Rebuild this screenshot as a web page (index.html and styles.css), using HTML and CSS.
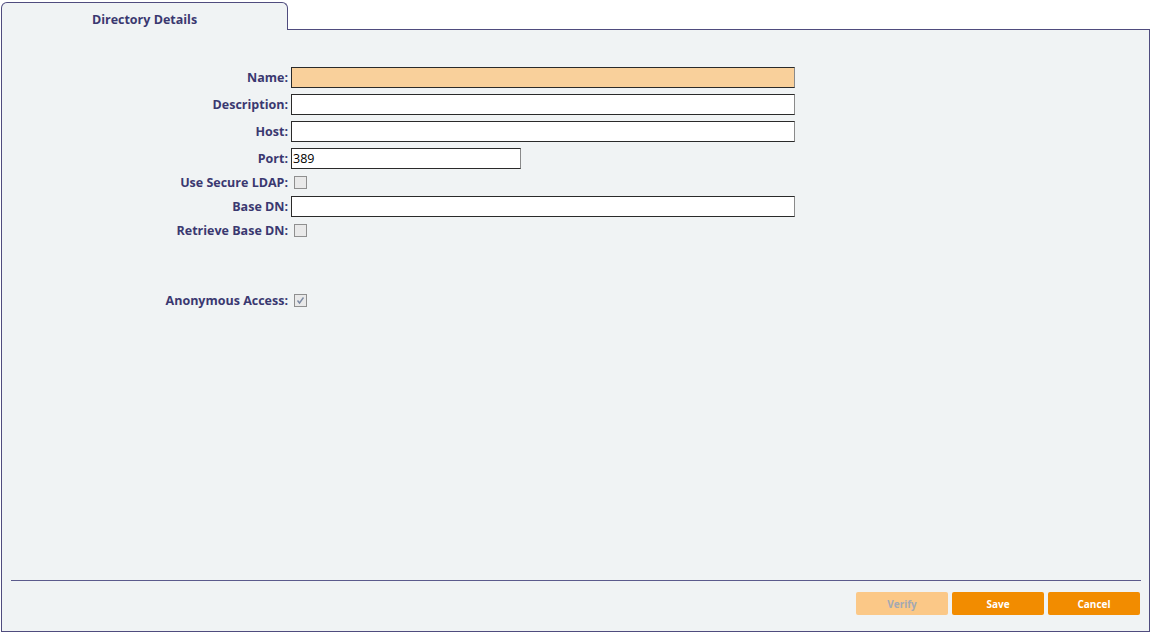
FILE: index.html
```html
<!DOCTYPE html>
<html lang="en">
<head>
    <meta charset="UTF-8">
    <title>Directory Details</title>
    <link rel="stylesheet" href="styles.css">
</head>
<body>

<div class="frame">
    <div class="tabstrip">
        <div class="tab">Directory Details</div>
        <div class="tab-fill"></div>
    </div>

    <div class="panel">
        <form class="form">
            <label for="name">Name:</label>
            <input type="text" id="name" class="field wide name">

            <label for="desc">Description:</label>
            <input type="text" id="desc" class="field wide">

            <label for="host">Host:</label>
            <input type="text" id="host" class="field wide">

            <label for="port">Port:</label>
            <input type="text" id="port" class="field port" value="389">

            <label class="check-label">Use Secure LDAP:</label>
            <div class="check-cell"><span class="check"></span></div>

            <label for="basedn">Base DN:</label>
            <input type="text" id="basedn" class="field wide">

            <label class="check-label">Retrieve Base DN:</label>
            <div class="check-cell"><span class="check"></span></div>

            <div class="spacer"></div>
            <div class="spacer"></div>

            <label class="check-label">Anonymous Access:</label>
            <div class="check-cell">
                <span class="check">
                    <svg width="11" height="11" viewBox="0 0 11 11"><path d="M2.5 5.5 L4.5 8 L8.5 2.5" fill="none" stroke="#7c8aa3" stroke-width="1.4"/></svg>
                </span>
            </div>
        </form>

        <div class="footer">
            <button type="button" class="btn disabled">Verify</button>
            <button type="button" class="btn">Save</button>
            <button type="button" class="btn">Cancel</button>
        </div>
    </div>
</div>

</body>
</html>
```

FILE: styles.css
```css
body {
    margin: 0;
    background: #ffffff;
    font-family: "Open Sans", Arial, sans-serif;
    color: #3a3870;
}
.frame {
    margin: 2px 0 0 1px;
    width: 1149px;
    height: 630px;
    display: flex;
    flex-direction: column;
}
.tabstrip {
    display: flex;
    height: 28px;
}
.tab {
    width: 285px;
    background: #f0f3f4;
    border: 1px solid #4f4c7e;
    border-bottom: none;
    border-radius: 6px 6px 0 0;
    font-size: 12.5px;
    font-weight: bold;
    text-align: center;
    line-height: 16px;
    padding-top: 9px;
    height: 18px;
}
.tab-fill {
    flex: 1;
    border-bottom: 1px solid #4f4c7e;
}
.panel {
    flex: 1;
    background: #f0f3f4;
    border: 1px solid #4f4c7e;
    border-top: none;
    display: flex;
    flex-direction: column;
}
.form {
    flex: 1;
    display: grid;
    grid-template-columns: 286px 1fr;
    column-gap: 3px;
    row-gap: 6px;
    align-content: start;
    align-items: center;
    padding-top: 37px;
}
label {
    text-align: right;
    font-size: 12.5px;
    font-weight: bold;
    line-height: 15px;
}
.field {
    height: 21px;
    box-sizing: border-box;
    border: 1px solid #2a2a2a;
    border-right-color: #8a8a8a;
    background: #ffffff;
    font-family: "Open Sans", Arial, sans-serif;
    font-size: 12.5px;
    color: #000000;
    padding: 0 1px;
    margin: 0;
}
.wide {
    width: 504px;
}
.port {
    width: 230px;
}
.name {
    background: #f9d09b;
}
.check-cell {
    height: 15px;
    display: flex;
    align-items: center;
    padding-left: 3px;
}
.check {
    width: 11px;
    height: 11px;
    border: 1px solid #8f8f8f;
    background: #e9e9e9;
    display: flex;
}
.spacer {
    height: 43px;
}
.footer {
    margin: 0 8px 0 9px;
    border-top: 1px solid #5b5a8c;
    padding: 11px 1px 16px 0;
    display: flex;
    justify-content: flex-end;
    gap: 4px;
}
.btn {
    width: 92px;
    height: 23px;
    border: none;
    border-radius: 2px;
    background: #f28c00;
    color: #ffffff;
    font-family: "Open Sans", Arial, sans-serif;
    font-size: 10px;
    font-weight: bold;
    cursor: pointer;
}
.btn.disabled {
    background: #fbc887;
    color: #a3a9b4;
    cursor: default;
}
```
